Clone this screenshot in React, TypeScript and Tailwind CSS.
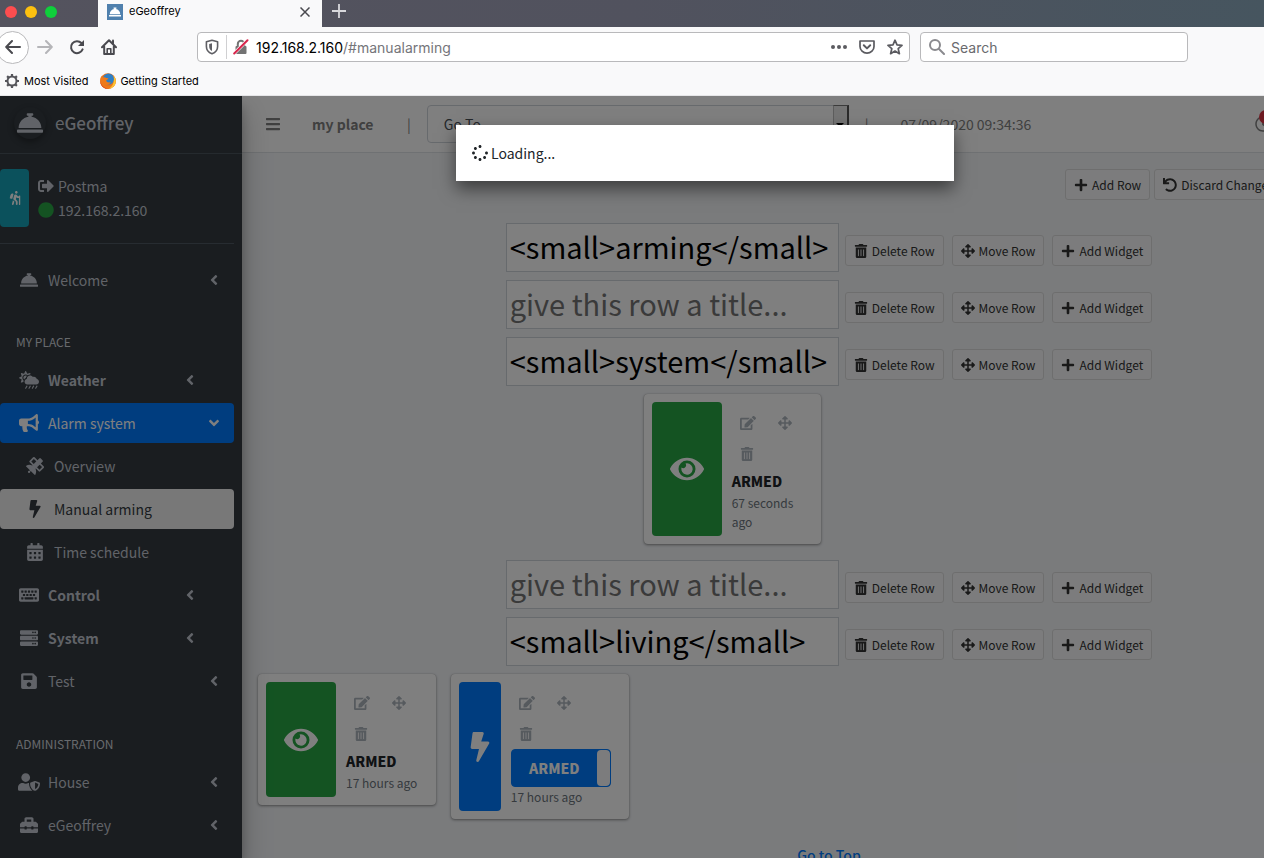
import React, { useState } from "react";
import type { IconType } from "react-icons";
import {
  FaAngleDown, FaAngleLeft, FaArrowsAlt, FaBars, FaBolt, FaBullhorn, FaCalendarAlt, FaCircle,
  FaCloudSunRain, FaConciergeBell, FaEdit, FaEye, FaHiking, FaKeyboard, FaPlus, FaRegClock,
  FaSatellite, FaSave, FaServer, FaSignOutAlt, FaSpinner, FaToolbox, FaTrashAlt, FaUndo, FaUserShield,
} from "react-icons/fa";

function BackIcon() {
  return (
    <svg viewBox="0 0 16 16" className="size-4" fill="none" stroke="#4a4a4f" strokeWidth="2" strokeLinecap="round" strokeLinejoin="round">
      <path d="M15 8H1.5M7 2 1.2 8 7 14" />
    </svg>
  );
}

function ForwardIcon() {
  return (
    <svg viewBox="0 0 16 16" className="size-4" fill="none" stroke="#b5b5b8" strokeWidth="2" strokeLinecap="round" strokeLinejoin="round">
      <path d="M1 8h13.5M9 2l5.8 6L9 14" />
    </svg>
  );
}

function ReloadIcon() {
  return (
    <svg viewBox="0 0 16 16" className="size-4" fill="none" stroke="#4a4a4f" strokeWidth="2" strokeLinecap="round">
      <path d="M13.6 10.4A6 6 0 1 1 12.4 4" />
      <path d="M15 1v6H9z" fill="#4a4a4f" stroke="none" />
    </svg>
  );
}

function HomeIcon() {
  return (
    <svg viewBox="0 0 16 16" className="size-4" fill="none" stroke="#4a4a4f" strokeWidth="2" strokeLinecap="round" strokeLinejoin="round">
      <path d="M1 8.2 8 1.2l7 7M3.2 7.5V15h9.6V7.5" />
      <path d="M6.2 14.5V9.8h3.6v4.7" strokeWidth="1.6" />
      <path d="M12 1.5v3" />
    </svg>
  );
}

function ShieldIcon() {
  return (
    <svg viewBox="0 0 16 16" className="size-4" fill="none" stroke="#5f5f64" strokeWidth="1.6" strokeLinejoin="round">
      <path d="M8 1.2 13.6 2.8v4.6c0 3.6-2.4 6.2-5.6 7.4-3.2-1.2-5.6-3.8-5.6-7.4V2.8z" />
      <path d="M8 4.2v7.8C6.2 11 5.2 9.4 5.2 7.4V5z" fill="#5f5f64" stroke="none" />
    </svg>
  );
}

function InsecureLockIcon() {
  return (
    <svg viewBox="0 0 16 16" className="size-4" fill="none">
      <path d="M4.800 8V5a3.200 3.200 0 0 1 6.400 0v3" stroke="#737373" strokeWidth="2" />
      <rect x="2.500" y="7" width="11" height="8" rx="1" fill="#737373" />
      <path d="M1.600 14 14 1.600" stroke="#fff" strokeWidth="3.200" />
      <path d="M1.200 14.500 14.500 1.200" stroke="#d7264c" strokeWidth="2" strokeLinecap="round" />
    </svg>
  );
}

function PocketIcon() {
  return (
    <svg viewBox="0 0 16 16" className="size-4" fill="none" stroke="#5b5b60" strokeWidth="1.700" strokeLinecap="round" strokeLinejoin="round">
      <path d="M1 2h14v5.500a7 6.700 0 0 1-14 0z" />
      <path d="M4.800 6.300 8 9.400l3.200-3.100" strokeWidth="2" />
    </svg>
  );
}

function StarIcon() {
  return (
    <svg viewBox="0 0 16 16" className="size-4" fill="none" stroke="#5b5b60" strokeWidth="1.700" strokeLinejoin="round">
      <path d="m8 1.200 2 4.700 5 .5-3.800 3.300 1.200 5L8 12l-4.400 2.700 1.200-5L1 6.400l5-.5z" />
    </svg>
  );
}

function GearIcon() {
  return (
    <svg viewBox="0 0 16 16" className="size-4" fill="none" stroke="#55555a">
      <circle cx="8" cy="8" r="4.500" strokeWidth="2" />
      <path strokeWidth="2.200" d="M8 1v2.500M8 12.500V15M1 8h2.500M12.500 8H15M3.100 3.100l1.700 1.700M11.200 11.200l1.700 1.700M3.100 12.900l1.700-1.700M11.200 4.800l1.700-1.700" />
    </svg>
  );
}

function FirefoxIcon() {
  return (
    <svg viewBox="0 0 16 16" className="size-4">
      <circle cx="8" cy="8" r="7.800" fill="#e8731c" />
      <circle cx="8.500" cy="6" r="5.500" fill="#2f7fc4" />
      <path d="M1.500 3 3 4.600C4.200 4 5.400 4.200 6.200 5l2.200.3c-.2 1.100-1.500 1.400-2.300 2.200.4 1.700 2.600 2.600 4.700 1.600-1 3-4.500 3.600-6.600 2.400C6 14 11 14 13.200 10.500 14.800 8 14.600 5 13.500 2.500c3 3.500 3 8 .3 10.800A7.800 7.800 0 0 1 .3 9C0 6.500.4 4.800 1.500 3z" fill="#ee7a1b" />
      <path d="M13.500 2.500c3 3.500 3 8 .3 10.800A7.700 7.700 0 0 1 9 15.700c3.800-2.200 6-7.200 4.500-13.200z" fill="#fcc531" />
      <path d="M.3 7c.2 5 3.500 8 8 8.700-4 .8-8.600-2.700-8-8.700z" fill="#d8431f" />
    </svg>
  );
}

function Browser() {
  return (
    <header className="shrink-0 bg-[#f9f9fa] font-[Inter,sans-serif] text-black">
      <div className="flex h-[27px] items-stretch bg-linear-to-r from-[#54535e] via-[#51525e] to-[#46555f]">
        <div className="flex w-[98px] items-center gap-2 pb-1 pl-[5px]">
          <span className="size-3 rounded-full bg-[#fc4d4f]" />
          <span className="size-3 rounded-full bg-[#fdc00f]" />
          <span className="size-3 rounded-full bg-[#0fcf3b]" />
        </div>
        <div className="flex w-56 items-center bg-[#f9f9fa] pr-3 pb-1 pl-[9px]">
          <span className="flex size-4 items-center justify-center bg-[#4f80ad] text-white">
            <FaConciergeBell className="size-3" />
          </span>
          <span className="ml-1.5 flex-1 text-[11px]">eGeoffrey</span>
          <button aria-label="Close tab">
            <svg viewBox="0 0 10 10" className="size-2.5" stroke="#4a4a4f" strokeWidth="1.500"><path d="M.5.5l9 9M9.500.5l-9 9" /></svg>
          </button>
        </div>
        <button aria-label="New tab" className="ml-2.5 pb-1.5">
          <svg viewBox="0 0 14 14" className="size-3.5" stroke="#d8d8dc" strokeWidth="1.800"><path d="M7 0v14M0 7h14" /></svg>
        </button>
      </div>
      <div className="flex h-10 items-center">
        <button aria-label="Back" className="-ml-1 flex size-[33px] items-center justify-center rounded-full border border-[#b9b9bb] bg-white"><BackIcon /></button>
        <button aria-label="Forward" className="ml-2"><ForwardIcon /></button>
        <button aria-label="Reload" className="ml-4"><ReloadIcon /></button>
        <button aria-label="Home" className="ml-4"><HomeIcon /></button>
        <div className="ml-20 flex h-[30px] w-[713px] items-center rounded-sm border border-[#b9b9bb] bg-white px-1.5">
          <ShieldIcon />
          <span className="mx-1.5 h-6 w-px bg-[#d0d0d2]" />
          <InsecureLockIcon />
          <a href="#manualarming" className="ml-[7px] flex-1 text-[14px] text-[#75757a]"><span className="text-black">192.168.2.160</span>/#manualarming</a>
          <button aria-label="Page actions">
            <svg viewBox="0 0 16 4" className="h-1 w-4" fill="#5b5b60"><circle cx="2" cy="2" r="2" /><circle cx="8" cy="2" r="2" /><circle cx="14" cy="2" r="2" /></svg>
          </button>
          <button aria-label="Save to Pocket" className="ml-3"><PocketIcon /></button>
          <button aria-label="Bookmark" className="ml-3"><StarIcon /></button>
        </div>
        <label className="ml-2.5 flex h-[30px] w-[268px] items-center rounded-sm border border-[#b9b9bb] bg-white pl-2">
          <svg viewBox="0 0 16 16" className="size-4" fill="none" stroke="#8a8a8e" strokeWidth="2" strokeLinecap="round"><circle cx="6" cy="6" r="5" /><path d="m10 10 5 5" /></svg>
          <input aria-label="Search" placeholder="Search" className="ml-1.5 min-w-0 flex-1 text-[14px] outline-none placeholder:text-[#6a6a6e]" />
        </label>
      </div>
      <nav className="flex h-[29px] items-center border-b border-[#e6e6e8] pl-1 text-[11px]">
        <a href="#visited" className="flex items-center gap-1"><GearIcon />Most Visited</a>
        <a href="#start" className="ml-3 flex items-center gap-1"><FirefoxIcon />Getting Started</a>
      </nav>
    </header>
  );
}

type Item = { label: string; icon: IconType; kind?: "group" | "open" | "sub" | "active"; iconSize?: string };

const place: Item[] = [
  { label: "Weather", icon: FaCloudSunRain, kind: "group", iconSize: "size-5" },
  { label: "Alarm system", icon: FaBullhorn, kind: "open", iconSize: "size-5" },
  { label: "Overview", icon: FaSatellite, kind: "sub" },
  { label: "Manual arming", icon: FaBolt, kind: "active" },
  { label: "Time schedule", icon: FaCalendarAlt, kind: "sub" },
  { label: "Control", icon: FaKeyboard, kind: "group", iconSize: "size-5" },
  { label: "System", icon: FaServer, kind: "group" },
  { label: "Test", icon: FaSave },
];

const admin: Item[] = [
  { label: "House", icon: FaUserShield, iconSize: "size-[22px]" },
  { label: "eGeoffrey", icon: FaToolbox },
];

const looks = {
  plain: "pl-4 pr-3",
  group: "pl-4 pr-9 font-bold",
  open: "bg-[#007bff] pl-4 pr-3 text-white",
  sub: "pl-[22px] pr-3",
  active: "bg-[#f1f1f1] pl-[22px] pr-3 text-[#343a40]",
};

function NavItem({ label, icon: Icon, kind, iconSize = "size-[18px]" }: Item) {
  const nested = kind === "sub" || kind === "active";
  return (
    <li>
      <a href={"#" + label} className={"flex h-10 items-center rounded " + looks[kind ?? "plain"]}>
        <span className="flex w-[26px] justify-center"><Icon className={iconSize} /></span>
        <span className="ml-1.5 flex-1">{label}</span>
        {!nested && (kind === "open" ? <FaAngleDown className="size-4" /> : <FaAngleLeft className="size-4" />)}
      </a>
    </li>
  );
}

function Sidebar() {
  return (
    <aside className="z-10 w-[242px] shrink-0 bg-[#343a40] text-[14px] text-[#c2c7d0] shadow-[0_14px_28px_rgba(0,0,0,0.25),0_10px_10px_rgba(0,0,0,0.22)]">
      <a href="#home" className="flex h-[58px] items-center border-b border-[#4b545c] pb-1 pl-3.5 text-[17px] leading-6">
        <span className="flex size-8 items-center justify-center rounded-full shadow-[0_3px_6px_rgba(0,0,0,0.35)]"><FaConciergeBell className="size-[26px]" /></span>
        <span className="ml-[9px]">e<span className="font-medium">Geoffrey</span></span>
      </a>
      <div className="mr-2 flex h-[90px] items-center border-b border-[#4f5962] pb-0.5">
        <button aria-label="Away mode" className="flex h-[58px] w-[29px] items-center justify-center rounded bg-[#17a2b8] text-white"><FaHiking className="size-3.5" /></button>
        <div className="ml-[9px] leading-6">
          <a href="#logout" className="flex items-center gap-1"><FaSignOutAlt className="size-4" />Postma</a>
          <a href="#house" className="flex items-center gap-1"><FaCircle className="size-4 text-[#28a745]" />192.168.2.160</a>
        </div>
      </div>
      <nav className="pt-4 pr-2">
        <ul><NavItem label="Welcome" icon={FaConciergeBell} /></ul>
        <h2 className="mt-[30px] mb-1.5 pl-4 text-[12px] leading-6 text-[#d0d4db]">MY PLACE</h2>
        <ul className="flex flex-col gap-[3px]">{place.map((i) => <NavItem key={i.label} {...i} />)}</ul>
        <h2 className="mt-[31px] mb-1.5 pl-4 text-[12px] leading-6 text-[#d0d4db]">ADMINISTRATION</h2>
        <ul className="flex flex-col gap-[3px]">{admin.map((i) => <NavItem key={i.label} {...i} />)}</ul>
      </nav>
    </aside>
  );
}

function Topbar() {
  return (
    <div className="flex h-[57px] shrink-0 items-center border-b border-[#dee2e6] bg-white text-[14px] text-[#808080]">
      <button aria-label="Toggle menu" className="ml-[23px]"><FaBars className="size-4" /></button>
      <a href="#place" className="ml-[31px] w-[63px] font-bold">my place</a>
      <span className="ml-8">|</span>
      <div className="relative ml-4 w-[422px]">
        <select aria-label="Go to page" className="h-[38px] w-full appearance-none rounded border border-[#ced4da] bg-white pl-4 text-[14px] text-[#495057]">
          <option>Go To</option>
        </select>
        <span className="pointer-events-none absolute inset-y-0 right-0 flex w-4 items-center justify-center border-t border-r-2 border-l border-t-[#777] border-r-[#555] border-l-[#bbb] bg-[#e8e8e8]">
          <svg viewBox="0 0 8 4" className="h-1 w-2"><path d="M0 0h8L4 4z" /></svg>
        </span>
      </div>
      <span className="ml-4">|</span>
      <time className="ml-8">07/09/2020 09:34:36</time>
      <button aria-label="Notifications" className="relative ml-56">
        <FaRegClock className="size-4" />
        <span className="absolute -top-1.5 left-1 size-3.5 rounded-full bg-[#dc3545]" />
      </button>
    </div>
  );
}

function ToolButton({ icon: Icon, children }: { icon: IconType; children: React.ReactNode }) {
  return (
    <button className="flex h-[31px] items-center gap-1 rounded-[3px] border border-[#dddddd] bg-[#f8f9fa] px-2 text-[12px] whitespace-nowrap text-[#333333]">
      <Icon className="size-3.5" />
      {children}
    </button>
  );
}

function TitleRow({ initial }: { initial: string }) {
  const [title, setTitle] = useState(initial);
  return (
    <div className="flex justify-center gap-2">
      <input
        aria-label="Row title"
        value={title}
        onChange={(e) => setTitle(e.target.value)}
        placeholder="give this row a title..."
        className="-mr-0.5 h-[49px] w-[333px] border border-[#ced4da] bg-white px-[3px] pb-1 text-[29px] leading-10 text-black placeholder:text-[#757575]"
      />
      <div className="flex gap-2 pt-3">
        <ToolButton icon={FaTrashAlt}>Delete Row</ToolButton>
        <ToolButton icon={FaArrowsAlt}>Move Row</ToolButton>
        <ToolButton icon={FaPlus}>Add Widget</ToolButton>
      </div>
    </div>
  );
}

function WidgetTools() {
  return (
    <div className="grid grid-cols-[38px_30px] text-[#adb5bd]">
      <button aria-label="Edit widget" className="flex h-[31px] items-center pl-2"><FaEdit className="size-4" /></button>
      <button aria-label="Move widget" className="flex h-[31px] items-center pl-2"><FaArrowsAlt className="size-3.5" /></button>
      <button aria-label="Delete widget" className="flex h-[31px] items-center pl-2"><FaTrashAlt className="size-3.5" /></button>
    </div>
  );
}

function Sensor({ age, className = "" }: { age: string; className?: string }) {
  return (
    <article className={"flex rounded bg-white p-2 shadow-[0_0_1px_rgba(0,0,0,0.25),0_1px_3px_rgba(0,0,0,0.4)] " + className}>
      <span className="flex w-[70px] shrink-0 items-center justify-center rounded bg-[#28a745] text-white"><FaEye className="size-[34px]" /></span>
      <div className="py-[5px] pl-2.5">
        <WidgetTools />
        <strong className="block text-[14px] leading-6 font-black text-[#212529]">ARMED</strong>
        <p className="text-[12px] leading-[19px] text-[#6c757d]">{age}</p>
      </div>
    </article>
  );
}

function Switch({ age }: { age: string }) {
  return (
    <article className="flex rounded bg-white p-2 shadow-[0_0_1px_rgba(0,0,0,0.25),0_1px_3px_rgba(0,0,0,0.4)]">
      <span className="flex w-[42px] shrink-0 items-center justify-center rounded bg-[#007bff] text-white"><FaBolt className="size-[30px]" /></span>
      <div className="py-[5px] pl-2.5">
        <WidgetTools />
        <button role="switch" aria-checked="true" className="flex h-[38px] w-[100px] overflow-hidden rounded border border-[#007bff] bg-[#007bff] text-[14px] font-black text-white">
          <span className="flex flex-1 items-center justify-center self-stretch">ARMED</span>
          <span className="w-[13px] self-stretch rounded bg-[#f8f9fa]" />
        </button>
        <p className="text-[12px] leading-[19px] text-[#6c757d]">{age}</p>
      </div>
    </article>
  );
}

export default function App() {
  return (
    <div className="flex h-screen flex-col overflow-hidden">
      <Browser />
      <div className="min-h-0 flex-1 overflow-hidden font-['Noto_Sans_CJK_SC',sans-serif]">
        <div className="relative flex h-full min-w-[1416px] overflow-hidden">
          <Sidebar />
          <div className="flex min-w-0 flex-1 flex-col bg-[#f4f6f9]">
            <Topbar />
            <main className="flex flex-1 flex-col px-4 pt-4">
              <div className="flex justify-end gap-1">
                <ToolButton icon={FaPlus}>Add Row</ToolButton>
                <ToolButton icon={FaUndo}>Discard Changes</ToolButton>
                <ToolButton icon={FaSave}>Save Changes</ToolButton>
              </div>
              <div className="mt-[23px] flex flex-col gap-2">
                <TitleRow initial="<small>arming</small>" />
                <TitleRow initial="" />
                <TitleRow initial="<small>system</small>" />
                <div className="mb-2 grid grid-cols-6 items-start gap-[15px]">
                  <Sensor age="67 seconds ago" className="col-start-3" />
                </div>
                <TitleRow initial="" />
                <TitleRow initial="<small>living</small>" />
                <div className="grid grid-cols-6 items-start gap-[15px]">
                  <Sensor age="17 hours ago" />
                  <Switch age="17 hours ago" />
                </div>
              </div>
              <a href="#top" className="mt-[26px] self-center text-[14px] font-medium text-[#007bff]">Go to Top</a>
            </main>
          </div>
          <div className="absolute inset-0 z-20 flex items-start justify-center bg-black/50 pt-[29px]">
            <div role="dialog" aria-label="Loading" className="mr-1.5 flex h-14 w-[498px] items-center gap-[3px] bg-white px-4 text-[14px] text-[#212529] shadow-[0_8px_16px_rgba(0,0,0,0.5)]">
              <FaSpinner className="size-4" />
              Loading...
            </div>
          </div>
        </div>
      </div>
    </div>
  );
}
